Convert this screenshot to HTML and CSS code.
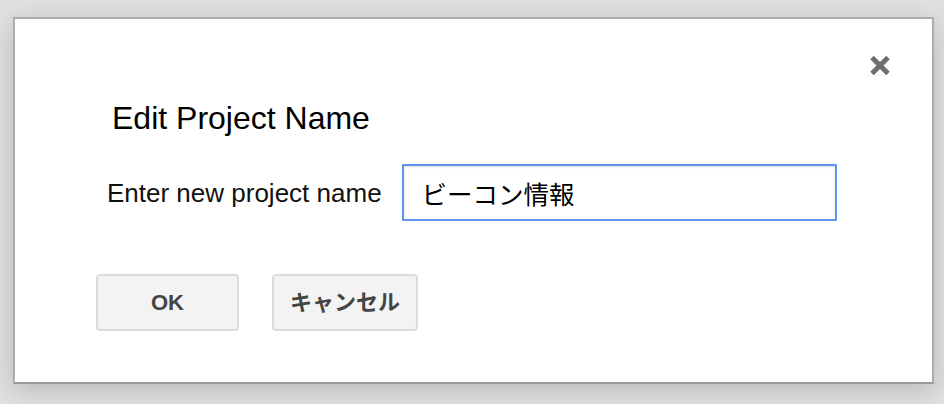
FILE: index.html
```html
<!DOCTYPE html>
<html lang="ja">
<head>
<meta charset="utf-8">
<title>Edit Project Name</title>
<link rel="stylesheet" href="styles.css">
</head>
<body>
<div class="dialog">
  <button class="close" aria-label="Close">
    <svg width="22" height="21" viewBox="0 0 22 21"><path d="M3 2.5 L19 18.5 M19 2.5 L3 18.5" stroke="#6e6e6e" stroke-width="5" fill="none"/></svg>
  </button>
  <div class="title">Edit Project Name</div>
  <div class="row">
    <label class="label" for="pname">Enter new project name</label>
    <input id="pname" class="input" type="text" value="ビーコン情報">
  </div>
  <div class="buttons">
    <button class="btn btn-ok">OK</button>
    <button class="btn btn-ja">キャンセル</button>
  </div>
</div>
</body>
</html>
```

FILE: styles.css
```css
html, body {
  margin: 0;
  padding: 0;
}
body {
  background: #e0e0e0;
  width: 944px;
  height: 404px;
  overflow: hidden;
  font-family: "Liberation Sans", "Noto Sans CJK JP", sans-serif;
}
.dialog {
  position: relative;
  box-sizing: border-box;
  width: 921px;
  height: 367px;
  margin: 17px 0 0 13px;
  background: #fff;
  border: 2px solid #acacac;
  border-bottom-color: #9a9a9a;
  box-shadow: 0 6px 24px rgba(0, 0, 0, 0.18);
  padding: 81px 0 0 81px;
}
.close {
  position: absolute;
  top: 36px;
  right: 41px;
  width: 22px;
  height: 21px;
  padding: 0;
  border: 0;
  background: none;
  filter: blur(0.5px);
}
.close svg {
  display: block;
}
.title {
  margin-left: 16px;
  font-size: 32px;
  line-height: 36px;
  color: #000;
}
.row {
  display: flex;
  align-items: center;
  margin-top: 28px;
  margin-left: 11px;
}
.label {
  font-size: 26px;
  color: #111;
  margin-right: 20px;
  margin-top: 2px;
}
.input {
  box-sizing: border-box;
  width: 435px;
  height: 57px;
  border: 2px solid #5f94ee;
  border-radius: 1px;
  padding: 0 0 0 18px;
  font-family: "Noto Sans CJK JP", "Liberation Sans", sans-serif;
  font-size: 25.5px;
  color: #000;
  outline: none;
  box-shadow: inset 0 1px 2px rgba(0, 0, 0, 0.15);
}
.buttons {
  display: flex;
  gap: 33px;
  margin-top: 53px;
}
.btn {
  box-sizing: border-box;
  min-width: 143px;
  height: 57px;
  padding: 0 16px;
  border: 2px solid #dcdcdc;
  border-radius: 4px;
  background: #f3f3f3;
  color: #444;
  font-family: "Liberation Sans", "Noto Sans CJK JP", sans-serif;
  font-size: 22px;
  font-weight: bold;
}
.btn-ja {
  padding-bottom: 5px;
}
```
